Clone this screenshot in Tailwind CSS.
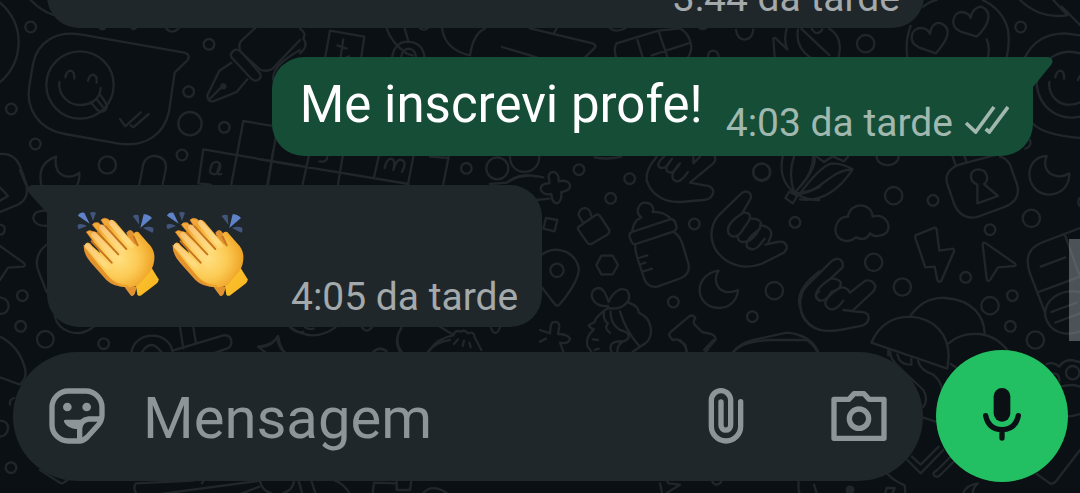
<!DOCTYPE html>
<html lang="pt">
<head>
  <meta charset="UTF-8" />
  <meta name="viewport" content="width=device-width, initial-scale=1.0"/>
  <title>Conversa</title>
  <script src="https://cdn.jsdelivr.net/npm/@tailwindcss/browser@4"></script>
</head>
<body class="relative h-screen overflow-hidden bg-[#0b1014] font-['Roboto',sans-serif]">

  <!-- Wallpaper doodles -->
  <svg class="absolute inset-0 h-full w-full" viewBox="0 0 1080 493" preserveAspectRatio="xMidYMid slice" fill="none" stroke="#20262a" stroke-width="7" stroke-linecap="round" stroke-linejoin="round" aria-hidden="true">
    <!-- top left: smiley bubble, fountain pen, letter board -->
    <g transform="scale(.33333)">
      <path d="M0 8Q55 55 56 125Q55 200 0 246M92 0Q122 32 160 45M300 85q8 6 14 0M395 85q6 4 12 0M498 85q18 20 38 0"/>
      <path d="M245 104L553 158Q573 164 563 180L524 218L507 335C492 402 438 444 352 430L195 402C115 388 76 325 88 258L99 192C112 125 170 90 245 104Z"/>
      <circle cx="240" cy="255" r="101"/>
      <path d="M196 232q4-20 16-20q12 2 11 24M264 242q4-18 16-18q12 4 10 24M178 246C174 290 210 315 240 315C270 315 300 300 302 264M272 306l20 24q12 10 24 0q10-12-2-26l-12-18M290 298l18 22"/>
      <path d="M360 357l16 22 46-42M392 376l8 6 46-40"/>
      <circle cx="92" cy="81" r="16"/><circle cx="34" cy="327" r="16"/><circle cx="106" cy="432" r="16"/><circle cx="322" cy="495" r="26"/>
      <circle cx="627" cy="133" r="16"/><circle cx="566" cy="275" r="16"/><circle cx="570" cy="371" r="35"/><circle cx="673" cy="382" r="16"/><circle cx="546" cy="465" r="16"/>
      <path d="M770 80L722 124Q714 140 722 156L782 210Q800 216 818 206L900 120M820 240Q812 200 900 150"/>
      <path d="M694 160q12-20 30-4l54 62q10 14-4 22q-12 6-22-6l-56-60q-6-8-2-14ZM694 188L658 212L622 286Q622 306 640 304L710 276L742 238M626 300L664 262"/>
      <circle cx="670" cy="259" r="6" fill="#20262a"/>
      <path d="M595 550L610 448L900 498M694 553L730 363L830 380M802 553L832 385M595 550L632 554M632 504q4-20 20-18q14 6 6 24q-8 16-20 12q-12-4-6-18M660 490l-8 26q0 10 12 6"/>
      <path d="M0 462Q42 458 60 498L82 560M168 470Q110 490 124 555M168 470Q160 525 205 530Q225 530 238 518Q240 535 232 555M418 553L430 492Q440 466 468 468Q500 474 498 504L488 553"/>
    </g>
    <!-- top strip -->
    <g transform="translate(300 0) scale(.33333)">
      <path d="M0 86q20 12 10 30q18 20-10 44M76 170L90 92L193 110L184 170M130 118L122 170M112 136l28 10M135 175l12-6M260 86Q275 130 320 160M314 86L324 120M276 175Q282 125 325 125Q370 128 374 175M304 170q4-24 24-24q18 4 20 24M318 160l20 6"/>
      <path d="M360 85q12 8 22 0M426 86Q436 150 510 166Q520 100 555 86M690 85L878 130Q892 136 882 146L855 172M770 85l-8 14M606 141L710 172M930 85q20 14 46 0M950 130L1075 92L1140 85Q1165 100 1172 128L1055 166M950 130Q940 140 948 172M1010 112L1028 172M1075 92L1102 170M1172 128q6 24-8 44"/>
    </g>
    <!-- top right: coconut, hearts, smiley -->
    <g transform="translate(660 0) scale(.33333)">
      <path d="M228 90Q232 118 254 119Q278 116 280 88M144 172q0-20 16-20q16 2 16 20M344 172L340 116Q344 110 350 118L382 148Q370 120 380 86M414 88Q405 140 450 172M424 86Q480 140 508 165M455 86q16 26 32 2M508 86Q550 110 536 172M118 84q10 6 20 0"/>
      <circle cx="617" cy="131" r="26"/><circle cx="1082" cy="81" r="16"/>
      <path d="M742 172Q735 120 752 78M790 20Q812 2 830 0M968 0Q1030 30 1044 90Q1050 130 1040 172M980 118Q990 140 984 172"/>
      <path d="M828 160L776 142C740 122 756 84 782 84C800 84 808 96 810 102C812 78 828 64 844 70C876 86 866 116 828 160ZM950 110L900 94C866 76 880 38 904 36C920 36 930 46 932 54C936 26 960 14 972 24C1000 44 980 82 950 110Z"/>
      <path d="M1080 0Q1140 58 1222 46L1180 0M1205 20L1260 75M1095 172Q1130 100 1215 100L1260 106M1260 160C1190 140 1132 190 1130 255C1140 330 1200 362 1260 350M1186 232q4-20 16-20q12 4 10 24M1254 240q2-10 8-14M1168 246C1164 290 1200 316 1230 314Q1250 314 1262 306M1120 372Q1150 404 1260 414M1110 420q6 20-14 26"/>
      <circle cx="305" cy="515" r="25"/>
    </g>
    <!-- left edge beside the received bubble -->
    <g transform="translate(0 170) scale(.33333)">
      <path d="M60 0L80 50Q86 88 54 104L0 126M0 52L24 78L0 92M0 228L70 278Q80 286 70 290L24 293L0 330M140 122Q100 120 100 146Q104 168 140 168M140 224Q100 256 114 300L140 366M164 438C174 480 230 512 284 468M0 164q16 2 14 16q-2 14-14 14M0 382q26 4 26 26q-2 24-26 24"/>
      <circle cx="67" cy="377" r="16"/><circle cx="62" cy="469" r="16"/><circle cx="136" cy="508" r="25"/><circle cx="311" cy="521" r="16"/>
      <path d="M0 500Q60 530 76 600Q80 625 60 644L0 622M394 548C404 480 510 480 518 548M425 548q28-46 60 0M540 472L550 535M580 472L588 520M518 542L670 496Q690 494 694 512Q696 530 680 536L640 550M774 530Q820 526 834 498Q830 528 856 548M774 530l26 20M870 470q14 20 40 16"/>
    </g>
    <!-- below the sent bubble and right of the received one -->
    <g transform="translate(260 150) scale(.33333)">
      <path d="M0 28L446 102M40 0L24 102M146 20L128 102M248 20L234 102M356 20L342 82M460 20L444 102M566 20L550 102M202 20q0 18-24 14M374 54q6-28 20-28q14 4 6 34q10-36 26-30q16 8 0 36M510 20l56 4"/>
      <circle cx="619" cy="55" r="16"/><circle cx="712" cy="55" r="33"/><path d="M750 20C750 80 836 82 838 20M690 102L740 98Q790 66 850 82M740 98Q780 66 830 80M828 150l40-4"/>
      <path d="M90 532Q160 580 226 532M135 532q12 8 26 4M306 532q14 20 30 0M692 532q14 34 28 0"/>
      <path d="M425 532Q400 570 420 605M510 600Q530 565 580 556M540 530L580 554Q588 538 602 545Q614 538 624 550Q642 542 644 562L664 600M594 568l-12 14M612 572l-4 16M628 578l4 14M345 602q16-14 34 0M0 592Q38 590 54 558Q58 585 70 605"/>
    </g>
    <!-- centre: flower, bottle, hands, moon, gift -->
    <g transform="translate(540 150) scale(.33333)">
      <path d="M28 90C16 60 60 54 56 94C96 84 104 122 64 126C68 168 36 172 34 132C-2 140-12 98 28 100Z"/>
      <path d="M18 204l34 6-8 34-34-8ZM2 318C30 286 100 294 116 352C120 385 80 440 58 464Q52 470 46 464L2 408"/>
      <circle cx="51" cy="361" r="20"/>
      <circle cx="117" cy="59" r="16"/><circle cx="269" cy="86" r="16"/><circle cx="212" cy="145" r="16"/><circle cx="463" cy="222" r="16"/><circle cx="665" cy="67" r="26"/><circle cx="765" cy="217" r="16"/><circle cx="400" cy="456" r="16"/><circle cx="703" cy="422" r="26"/><circle cx="637" cy="500" r="16"/>
      <path d="M114 232L166 196Q174 190 180 198L208 240Q210 248 202 254L154 282Q146 284 142 278L114 238ZM128 216L116 196C116 168 150 168 152 192L156 202"/>
      <path d="M184 317h34l16 28-16 28h-34l-15-28Z"/>
      <path d="M276 246L390 208Q402 206 406 218L410 232Q410 240 402 244L288 282Q278 284 274 274L268 258Q268 248 276 246ZM276 246Q280 212 304 202C282 186 298 156 318 158C336 160 344 174 338 186Q370 184 392 206M286 284Q284 300 294 330L314 390Q326 414 352 410L424 384Q450 372 446 344L428 284Q420 258 404 248M296 324l26-8M304 342l12-4M310 364l26-8M164 22q40 8 80-2"/>
      <path d="M350 20Q316 60 320 90C330 130 370 158 420 156L490 150Q518 148 520 124Q516 106 494 106L450 98L520 40Q530 28 524 20M372 20C350 40 350 52 366 54C380 54 386 40 396 26C374 50 374 66 392 68C406 66 412 52 420 40C390 70 392 92 412 94C428 92 434 78 444 66M460 20v20l20-20"/>
      <path d="M600 134L536 196C500 240 510 300 560 332C600 356 630 352 664 342L732 308Q750 290 730 276Q724 274 712 276L676 284M600 134Q606 126 616 124Q636 126 632 146L606 190M610 188C580 206 556 226 566 250C580 270 600 256 610 236C626 216 634 204 628 192Q618 186 610 188M634 206C654 204 670 216 660 232C650 258 630 276 610 276C592 276 590 256 596 254M660 226C680 226 700 240 692 260L684 280M660 236C640 252 616 270 620 288C632 306 652 296 660 284L674 266"/>
      <path d="M728 20C712 96 760 150 838 150M748 125L736 144L758 160L772 138ZM762 20Q744 70 762 126M824 20Q830 60 762 130Q800 130 840 110"/>
      <path d="M536 362C460 372 460 470 536 474C570 474 592 450 594 420Q576 428 560 426C524 420 522 382 536 362Z"/>
      <path d="M204 468C160 472 140 430 168 416C190 406 200 440 206 456C216 430 240 408 262 422C280 450 250 482 204 474ZM204 474Q166 500 164 516L146 526Q152 536 162 538Q136 560 142 588L154 605M158 568l16 2M164 600l12-4M266 458Q296 468 296 488C340 506 342 560 316 580L278 605M240 484Q256 540 296 586M212 484Q210 520 240 540C270 546 276 566 250 574C216 572 206 584 214 605M192 484Q188 510 204 520Q190 536 210 548M232 605q0-20 14-28"/>
      <path d="M390 560Q384 554 392 546L444 502Q456 490 466 504Q458 516 464 524L486 546L514 552Q530 560 526 570L500 600M390 560L398 570L412 568L436 584L440 605M496 605l8-6M580 605Q600 580 640 570L740 548Q800 550 832 605M838 364Q764 420 780 470Q790 520 838 540M838 424q-20 12 0 28"/>
      <path d="M0 540L30 550L32 528C36 510 58 512 58 530L54 552Q82 552 90 566Q86 584 60 578L70 605M0 575L18 566"/>
    </g>
    <!-- right: cloud, bolt, cursor, lock, umbrella -->
    <g transform="translate(800 150) scale(.33333)">
      <path d="M40 20Q38 70 0 110M0 130Q60 50 94 40Q130 40 158 58Q90 160 0 148M0 132C70 120 90 60 158 58M50 20l22 16 24-16M100 20l32 14 12-14M230 20C232 54 294 54 296 20"/>
      <path d="M144 200C150 155 214 155 218 200C262 186 282 240 250 254Q224 264 210 250Q196 276 168 262C136 288 98 262 108 228Q118 198 144 200Z"/>
      <circle cx="281" cy="137" r="26"/><circle cx="399" cy="151" r="16"/><circle cx="570" cy="239" r="16"/><circle cx="694" cy="205" r="26"/><circle cx="221" cy="337" r="26"/><circle cx="307" cy="411" r="26"/><circle cx="497" cy="382" r="16"/><circle cx="570" cy="467" r="26"/><circle cx="637" cy="437" r="16"/><circle cx="631" cy="529" r="16"/><circle cx="706" cy="570" r="26"/>
      <path d="M346 256L404 233Q410 234 410 240L418 302L458 296Q464 298 462 304L424 392Q416 400 412 390L404 350L376 352L346 264ZM548 284Q548 274 558 280L644 340Q650 346 644 348L594 352L570 390Q562 398 560 386Z"/>
      <path d="M478 44C444 56 432 80 444 108L464 166C480 200 510 210 540 198L616 170C650 156 660 130 650 100L630 44Q618 24 600 20M478 44L590 14M458 20l10 28M494 20l6 18"/>
      <path d="M532 104C504 92 508 58 536 58C564 60 568 92 552 102L594 138L532 160Z"/>
      <path d="M740 18C670 20 670 128 746 134C784 132 808 110 808 70Q790 82 770 78C736 72 730 44 740 18ZM838 145q-6 10 0 22"/>
      <path d="M92 386L128 352Q132 330 112 326Q102 328 94 334L20 408C-10 440-4 500 30 526C60 548 100 544 130 538L190 526Q212 514 204 494Q194 484 180 486L130 480M92 386C60 406 40 430 50 444C64 462 84 446 94 426C110 420 126 416 122 396Q112 384 92 386M124 412C90 430 66 456 80 470C96 488 114 474 130 452M124 412Q142 412 150 428L196 392Q218 388 226 408Q226 420 216 428L160 480"/>
      <path d="M214 578C240 520 280 500 330 500C400 504 446 550 446 620L442 656L214 578ZM330 500Q370 440 436 444C520 450 552 500 554 550M446 580Q480 548 540 552Q590 558 626 605M265 596v20"/>
      <path d="M840 234L730 276C690 290 672 320 690 370L736 490M794 252L840 380M722 350L796 322M716 426L840 380M838 426C780 416 730 450 736 500C750 550 800 560 840 544M754 486L830 458M766 518L840 490M0 556Q40 570 54 605"/>
    </g>
    <!-- bottom left and bottom edge -->
    <g transform="translate(0 340) scale(.33333)">
      <path d="M0 242q24 2 24 22q-2 24-24 26M42 174q-14 4-12 20M120 390L180 428Q188 432 194 426L210 414"/>
      <circle cx="33" cy="383" r="16"/>
      <path d="M580 422L408 430Q398 442 408 459M780 422L420 470M610 422l-4 8M778 440L700 470M780 422Q786 452 812 459M850 459Q880 450 882 422M896 422L906 459M934 422L946 459M1004 422Q1030 430 1048 459M1118 459L1122 428L1190 430V422M1190 450H1230L1234 422M1190 422v28M1270 459Q1296 430 1340 459"/>
      <path d="M1192 0q0 20 14 36M1284 36q20-30 66-36M1120 34q20-14 40 0"/>
    </g>
    <!-- bottom right -->
    <g transform="translate(660 340) scale(.33333)">
      <path d="M690 34Q690 60 720 84L790 150Q806 180 790 200M712 44Q720 76 754 74V56M774 62Q780 90 820 104Q850 130 846 160M872 72L900 90M788 232L830 246M60 0q20 20 20 36M160 0L132 30M220 36Q250 4 330 0H440Q460 10 474 36"/>
      <path d="M742 360L782 400L850 330M756 350L782 374L836 320M880 342L832 390Q816 398 822 406Q832 416 844 402L904 342"/>
      <circle cx="1238" cy="98" r="20"/>
      <path d="M1160 72Q1180 64 1198 80Q1210 60 1234 60L1260 66M1200 140Q1240 130 1260 140M1180 100Q1200 100 1198 124M1214 230Q1240 228 1260 222M1130 402L1170 430Q1180 434 1188 424L1260 330M910 459Q920 434 954 430Q940 440 938 459"/>
      <path d="M416 422Q414 445 418 459M462 434L470 459M680 400Q700 422 734 436L736 459M676 459L680 444H704L698 459M0 430L6 459M20 422L26 430L60 434L20 459M156 422Q160 434 170 434Q184 430 184 422"/>
      <circle cx="570" cy="450" r="10" fill="#20262a"/>
    </g>
  </svg>

  <div class="relative flex h-full flex-col justify-end">

    <!-- Messages -->
    <main class="flex flex-col gap-[29px] px-[27px] pb-[23px]">
      <div class="mr-[129px] ml-5 flex h-[100px] shrink-0 items-end justify-end rounded-[32px] bg-[#20272a] pr-6 pb-2">
        <time class="text-[39px] leading-[44px] text-[#a4a9ab]">3:44 da tarde</time>
      </div>

      <div class="flex items-start justify-end">
        <div class="flex items-end rounded-l-[32px] rounded-br-[32px] bg-[#154d37] pt-[18px] pr-6 pb-[11px] pl-7">
          <p class="mb-[10px] text-[51px] leading-[60px] text-white">Me inscrevi profe!</p>
          <time class="ml-[23px] text-[39px] leading-[44px] text-[#a1b8af]">4:03 da tarde</time>
          <svg class="mb-[11px] ml-3 h-7 w-11" viewBox="915 318 132 84" fill="none" stroke="#a1b8af" stroke-width="11" role="img" aria-label="Entregue">
            <path d="M918 369L947 396L1002 321"/><path d="M977 387L988 396L1044 321"/>
          </svg>
        </div>
        <svg class="h-[30px] w-5 text-[#154d37]" viewBox="0 0 20 30" fill="currentColor" aria-hidden="true"><path d="M0 0H15Q22 2 18 8L0 30Z"/></svg>
      </div>

      <div class="flex items-start">
        <svg class="h-[30px] w-5 text-[#20272a]" viewBox="0 0 20 30" fill="currentColor" aria-hidden="true"><path d="M20 0H5Q-2 2 2 8L20 28Z"/></svg>
        <div class="flex items-end rounded-r-[32px] rounded-bl-[32px] bg-[#20272a] pt-[26px] pr-6 pb-2 pl-[30px]">
          <div class="mb-[22px] flex" role="img" aria-label="Palmas">
            <svg class="h-[86px] w-[89px]" viewBox="20 33 267 258">
              <defs>
                <radialGradient id="skin" gradientUnits="userSpaceOnUse" cx="145" cy="175" r="115">
                  <stop offset="0" stop-color="#ffe083"/><stop offset=".5" stop-color="#fccb55"/><stop offset="1" stop-color="#ec9c1c"/>
                </radialGradient>
                <linearGradient id="wrist" x1="0" y1="0" x2="1" y2="1">
                  <stop offset="0" stop-color="#fdc436"/><stop offset="1" stop-color="#f5b51c"/>
                </linearGradient>
                <linearGradient id="finger" gradientUnits="userSpaceOnUse" x1="45" y1="70" x2="150" y2="190">
                  <stop offset="0" stop-color="#eda558"/><stop offset=".35" stop-color="#fbca7a"/><stop offset=".8" stop-color="#ffdc80"/><stop offset="1" stop-color="#ffdf85" stop-opacity="0"/>
                </linearGradient>
                <g id="clap">
                  <!-- motion marks -->
                  <path fill="#5f83c9" d="M23 47Q28 36 42 38L58 71ZM220 43Q232 41 245 54L210 84Z"/>
                  <path fill="#42557d" d="M59 38Q68 34 77 38L68 62ZM22 74Q33 68 50 78L25 88Q20 82 22 74ZM187 48Q196 41 205 46L207 74ZM218 84Q236 76 249 84Q251 94 246 98Z"/>
                  <!-- hand behind -->
                  <path fill="#e29330" d="M168 98Q180 82 190 98L215 125L200 180ZM160 258L182 287Q188 290 193 282L200 260ZM40 134Q38 162 62 188L108 240Q130 262 170 262L120 180Z"/>
                  <path fill="#f3a93c" stroke="#d98322" stroke-width="2" d="M92 60Q100 50 114 58L150 98L130 120ZM66 74Q70 66 84 68L130 110L120 140ZM48 96Q56 88 66 94L130 160L110 180Z"/>
                  <!-- front hand -->
                  <path fill="url(#wrist)" d="M196 250L244 204L265 238Q266 245 260 250L213 286Q206 290 201 284Z"/>
                  <path fill="url(#skin)" d="M118 62Q128 56 136 66L192 132Q200 138 196 122L190 104Q192 92 204 96L232 128Q250 145 252 166Q254 192 240 214L204 256C176 268 142 262 118 234L46 148Q38 132 50 128Q58 126 66 138L90 160L62 112Q56 96 70 94Q78 94 84 102L104 124L82 88Q80 74 94 74Q102 74 108 82L122 98L110 76Q110 66 118 62Z"/>
                  <g fill="none" stroke="url(#finger)" stroke-width="16" stroke-linecap="round">
                    <path d="M123 68L184 138"/><path d="M94 82L158 152"/><path d="M70 104L138 176"/><path d="M51 138L116 206"/>
                  </g>
                  <g fill="none" stroke="#c87520" stroke-width="6" stroke-linecap="round">
                    <path d="M106 79L168 147"/><path d="M82 97L144 163"/><path d="M64 124L124 188"/><path d="M190 110L202 136"/>
                  </g>
                  <path fill="none" stroke="#e8941f" stroke-width="5" stroke-linecap="round" opacity=".7" d="M46 152L110 228Q136 256 172 258"/>
                </g>
              </defs>
              <use href="#clap"/>
            </svg>
            <svg class="h-[86px] w-[89px]" viewBox="20 33 267 258"><use href="#clap"/></svg>
          </div>
          <time class="ml-9 text-[39px] leading-[44px] text-[#a4a9ab]">4:05 da tarde</time>
        </div>
      </div>
    </main>

    <!-- Composer -->
    <form class="flex items-center gap-[13px] pr-3 pb-[11px] pl-[13px]" onsubmit="return false">
      <div class="flex h-[129px] min-w-0 flex-1 items-center rounded-full bg-[#20272a] px-9 text-[#8d9598]">
        <button type="button" aria-label="Figurinhas" class="shrink-0">
          <svg class="size-14" viewBox="147 144 168 168" fill="none" stroke="currentColor" stroke-width="16" stroke-linejoin="round">
            <path d="M238 303H205a49 49 0 0 1-49-49V202a49 49 0 0 1 49-49H257a49 49 0 0 1 49 49V225C306 237 302 247 294 256L262 291C254 299 246 303 238 303Z"/>
            <path d="M239 300V266Q241 240 266 237H304"/>
            <g fill="currentColor" stroke="none"><circle cx="202" cy="201" r="13"/><circle cx="260" cy="201" r="13"/><path d="M196 239H250L236 267C214 268 198 258 192 245Q191 239 196 239Z"/></g>
          </svg>
        </button>
        <input type="text" aria-label="Mensagem" placeholder="Mensagem" class="ml-[38px] min-w-0 flex-1 pt-1 text-[58px] leading-[68px] text-white outline-none placeholder:text-[#8d9598]"/>
        <button type="button" aria-label="Anexar" class="shrink-0">
          <svg class="h-14 w-9" viewBox="145 144 108 168" fill="none" stroke="currentColor" stroke-width="16" stroke-linecap="round"><path d="M243 185V259a44 44 0 0 1-88 0V181a29 29 0 0 1 58 0V256a14 14 0 0 1-29 0V186"/></svg>
        </button>
        <button type="button" aria-label="Câmera" class="ml-[87px] shrink-0">
          <svg class="size-14" viewBox="513 144 168 168" fill="none" stroke="currentColor" stroke-width="16" stroke-linejoin="round"><path d="M522 178H567L582 161H612L627 178H672V295H522Z"/><circle cx="597" cy="236" r="29"/></svg>
        </button>
      </div>
      <button type="button" aria-label="Gravar áudio" class="flex size-[132px] shrink-0 items-center justify-center rounded-full bg-[#23c063] text-[#0b1014]">
        <svg class="h-14 w-10" viewBox="966 144 120 168" fill="none" stroke="currentColor" stroke-width="16" stroke-linecap="round">
          <rect x="1001" y="144" width="50" height="101" rx="25" fill="currentColor" stroke="none"/>
          <path d="M977 227Q986 269 1026 269Q1066 269 1075 227M1026 270V294"/>
        </svg>
      </button>
    </form>
  </div>

  <!-- Scroll thumb -->
  <div class="absolute top-[239px] right-0 h-[102px] w-[11px] bg-[#8d9598]/50"></div>

</body>
</html>
